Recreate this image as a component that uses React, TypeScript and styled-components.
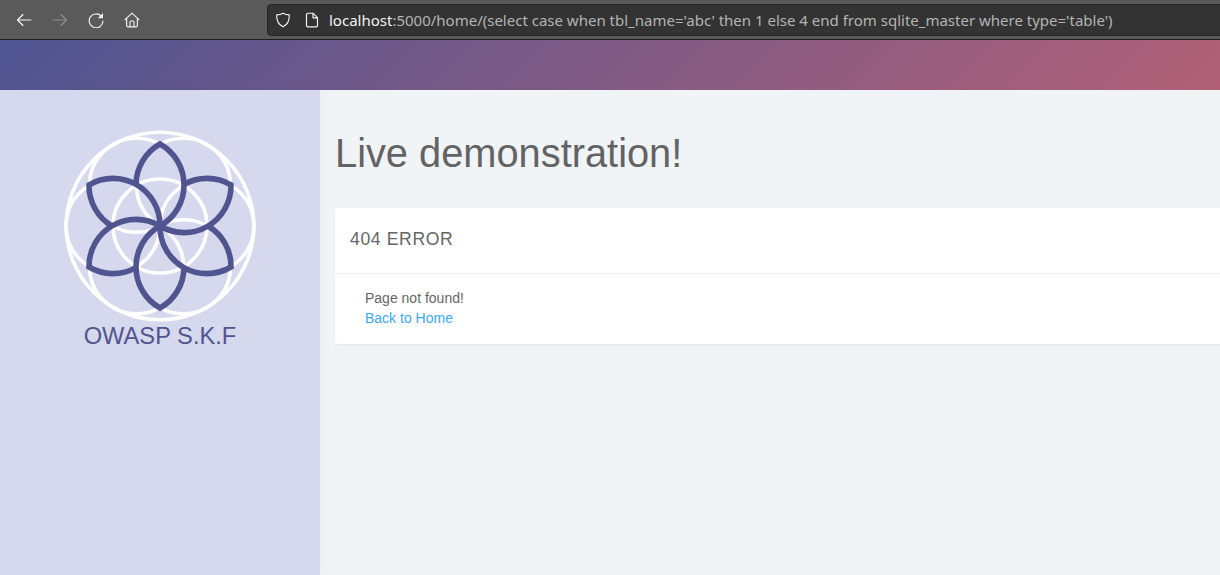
import React from 'react';
import styled, { createGlobalStyle } from 'styled-components';

const GlobalStyle = createGlobalStyle`
  html, body {
    margin: 0;
    height: 100%;
    overflow: hidden;
  }
  body {
    font-family: "Liberation Sans", Arial, sans-serif;
    background: #f0f4f7;
  }
`;

const Page = styled.div`
  display: flex;
  flex-direction: column;
  height: 575px;
  width: 1220px;
  overflow: hidden;
`;

const Toolbar = styled.div`
  display: flex;
  align-items: center;
  flex: none;
  box-sizing: border-box;
  height: 40px;
  padding-left: 16px;
  background: #5a5a5a;
  border-bottom: 1px solid #1f1f1f;
`;

const NavIcons = styled.div`
  display: flex;
  align-items: center;
  gap: 20px;
`;

const NavIcon = styled.svg<{ $dim?: boolean }>`
  display: block;
  width: 16px;
  height: 16px;
  fill: none;
  stroke: ${(p) => (p.$dim ? '#8e8e8e' : '#f4f4f4')};
  stroke-width: 1.15;
  stroke-linecap: round;
  stroke-linejoin: round;
  flex: none;
`;

const UrlBar = styled.div`
  display: flex;
  align-items: center;
  flex: 1;
  box-sizing: border-box;
  height: 32px;
  margin: 0 -6px 0 127px;
  padding-left: 7px;
  gap: 13px;
  background: #333333;
  border: 1px solid #272727;
  border-radius: 4px;
  min-width: 0;
`;

const UrlText = styled.span`
  margin-left: -4px;
  font-family: "Noto Sans", "Open Sans", sans-serif;
  font-size: 15px;
  color: #b4b4b4;
  white-space: nowrap;
`;

const Host = styled.span`
  color: #f2f2f2;
`;

const Banner = styled.div`
  flex: none;
  height: 50px;
  background: linear-gradient(135deg, #4f5592 0%, #b16076 100%);
`;

const Main = styled.div`
  display: flex;
  flex: 1;
  min-height: 0;
`;

const Sidebar = styled.aside`
  display: flex;
  flex-direction: column;
  align-items: center;
  flex: none;
  width: 320px;
  padding-top: 36px;
  background: #d6d8ee;
  box-shadow: 3px 0 12px rgba(0, 0, 0, 0.03);
`;

const Logo = styled.svg`
  display: block;
  width: 200px;
  height: 200px;
`;

const Brand = styled.div`
  margin-top: -4px;
  font-size: 23.7px;
  line-height: 28px;
  color: #50558f;
`;

const Content = styled.main`
  flex: 1;
  min-width: 0;
  padding-left: 15px;
`;

const Title = styled.h1`
  margin: 0;
  padding: 38px 0 29px;
  font-size: 39.8px;
  font-weight: 400;
  line-height: 51px;
  color: #636363;
`;

const Card = styled.section`
  margin-right: -10px;
  background: #ffffff;
  border-radius: 4px;
  box-shadow: 0 1px 2px rgba(0, 0, 0, 0.06);
`;

const CardHeader = styled.h2`
  margin: 0;
  padding: 20px 15px 23px;
  border-bottom: 1px solid #e9ecef;
  font-size: 17.6px;
  font-weight: 400;
  line-height: 22px;
  letter-spacing: 0.62px;
  color: #666666;
`;

const CardBody = styled.div`
  padding: 14px 30px 16px;
  font-size: 14px;
  line-height: 20px;
  color: #666666;
`;

const BackLink = styled.a`
  display: block;
  color: #3ea6f5;
  text-decoration: none;
`;

const petals = [0, 60, 120, 180, 240, 300];
const rings = [
  [-23.5, -40.7],
  [23.5, -40.7],
  [47, 0],
  [23.5, 40.7],
  [-23.5, 40.7],
  [-47, 0],
  [0, 0],
];

const App: React.FC = () => {
  return (
    <Page>
      <GlobalStyle />
      <Toolbar>
        <NavIcons>
          <NavIcon viewBox="0 0 16 16">
            <path d="M15 8H1.500M7 2.500 1.500 8 7 13.500" />
          </NavIcon>
          <NavIcon viewBox="0 0 16 16" $dim>
            <path d="M1 8h13.500M9 2.500 14.500 8 9 13.500" />
          </NavIcon>
          <NavIcon viewBox="0 0 16 16">
            <path d="M13.200 4.200A6.900 6.900 0 1 0 15 9" />
            <path d="M15 1v5.200H9.800z" fill="#f4f4f4" stroke="none" />
          </NavIcon>
          <NavIcon viewBox="0 0 16 16">
            <path d="M1 7.700 8 1.200l7 6.500M2.600 6.400v7.200c0 .8.500 1.200 1.200 1.200h8.400c.7 0 1.200-.4 1.200-1.200V6.400M6 14.600V10c0-.6.400-1 1-1h2c.6 0 1 .4 1 1v4.600" />
          </NavIcon>
        </NavIcons>
        <UrlBar>
          <NavIcon viewBox="0 0 16 16">
            <path d="M8 1.200c2 1.100 4 1.600 6.300 1.700.2 5.500-1.800 9.600-6.300 11.900C3.500 12.500 1.500 8.400 1.700 2.900 4 2.800 6 2.300 8 1.200z" />
          </NavIcon>
          <NavIcon viewBox="0 0 16 16">
            <path d="M2.500 2.500c0-.8.500-1.300 1.300-1.300h5.200l4.500 4.500v7.800c0 .8-.5 1.300-1.300 1.300H3.800c-.8 0-1.300-.5-1.300-1.300zM9 1.500v4.300h4.300" />
          </NavIcon>
          <UrlText>
            <Host>localhost</Host>:5000/home/(select case when tbl_name='abc' then 1 else 4 end from sqlite_master where type='table')
          </UrlText>
        </UrlBar>
      </Toolbar>
      <Banner />
      <Main>
        <Sidebar>
          <Logo viewBox="-100 -100 200 200">
            <g fill="none" stroke="#ffffff" strokeWidth="3.6">
              <circle r="93.800" />
              {rings.map(([cx, cy]) => (
                <circle key={`${cx},${cy}`} cx={cx} cy={cy} r="47" />
              ))}
            </g>
            <g fill="none" stroke="#50558f" strokeWidth="5.6" strokeLinejoin="miter">
              {petals.map((angle) => (
                <path
                  key={angle}
                  transform={`rotate(${angle})`}
                  d="M0 0A47 47 0 0 0 0 -82A47 47 0 0 0 -24 -41.600"
                />
              ))}
            </g>
          </Logo>
          <Brand>OWASP S.K.F</Brand>
        </Sidebar>
        <Content>
          <Title>Live demonstration!</Title>
          <Card>
            <CardHeader>404 ERROR</CardHeader>
            <CardBody>
              Page not found!
              <BackLink href="#">Back to Home</BackLink>
            </CardBody>
          </Card>
        </Content>
      </Main>
    </Page>
  );
};

export default App;
